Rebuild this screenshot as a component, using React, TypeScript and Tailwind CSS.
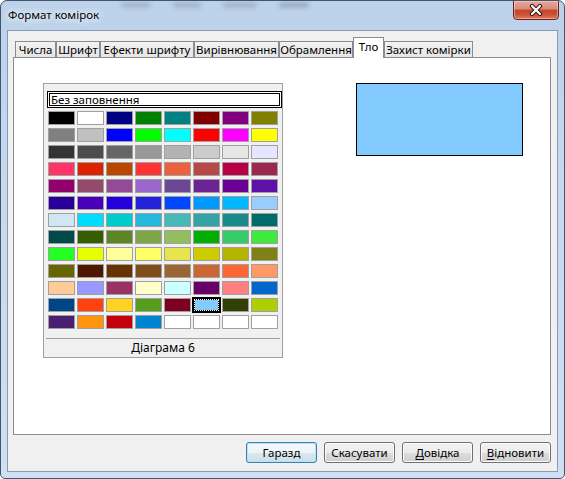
import React from "react";

const ROWS: string[][] = [
  ["#000000", "#ffffff", "#000080", "#008000", "#008080", "#800000", "#800080", "#808000"],
  ["#808080", "#c0c0c0", "#0000ff", "#00ff00", "#00ffff", "#ff0000", "#ff00ff", "#ffff00"],
  ["#333333", "#4c4c4c", "#666666", "#999999", "#b3b3b3", "#cccccc", "#e6e6e6", "#e6e6ff"],
  ["#ff3366", "#dc2300", "#b84700", "#ff3333", "#eb613d", "#b84747", "#b80047", "#99284c"],
  ["#94006b", "#944a6b", "#944a94", "#9966cc", "#6b4794", "#6b2394", "#6b0094", "#5e11a6"],
  ["#280099", "#4700b8", "#2300dc", "#2323dc", "#0047ff", "#0099ff", "#00b8ff", "#99ccff"],
  ["#cfe7f5", "#00dcff", "#00cccc", "#23b8dc", "#47b8b8", "#33a3a3", "#198a8a", "#006b6b"],
  ["#004a4a", "#355e00", "#5c8526", "#7da647", "#94bd5e", "#00ae00", "#33cc66", "#3deb3d"],
  ["#23ff23", "#e6ff00", "#ffff99", "#ffff66", "#e6e64c", "#cccc00", "#b3b300", "#808019"],
  ["#666600", "#4c1900", "#663300", "#804c19", "#996633", "#cc6633", "#ff6633", "#ff9966"],
  ["#ffcc99", "#9999ff", "#993366", "#ffffcc", "#ccffff", "#660066", "#ff8080", "#0066cc"],
  ["#004586", "#ff420e", "#ffd320", "#579d1c", "#7e0021", "#83caff", "#314004", "#aecf00"],
  ["#4b1f6f", "#ff950e", "#c5000b", "#0084d1", "#ffffff", "#ffffff", "#ffffff", "#ffffff"],
];

const TABS: { label: string; w: string; active?: boolean }[] = [
  { label: "Числа", w: "w-[41px]" },
  { label: "Шрифт", w: "w-[44px]" },
  { label: "Ефекти шрифту", w: "w-[94px]" },
  { label: "Вирівнювання", w: "w-[85px]" },
  { label: "Обрамлення", w: "w-[74px]" },
  { label: "Тло", w: "w-[31px]", active: true },
  { label: "Захист комірки", w: "w-[89px]" },
];

function Swatch({ color, selected }: { color: string; selected: boolean }) {
  if (selected) {
    return (
      <div className="-m-[1px] h-[16px] w-[29px] bg-black p-[2px]">
        <div className="h-full w-full border border-dotted border-white">
          <div className="h-full w-full" style={{ backgroundColor: color }} />
        </div>
      </div>
    );
  }
  return (
    <div
      className="h-[14px] w-[27px] border border-[#a0a0a0]"
      style={{ backgroundColor: color }}
    />
  );
}

function Button({ children, def }: { children: React.ReactNode; def?: boolean }) {
  return (
    <div
      className={
        "flex h-[21px] w-[71px] items-center justify-center whitespace-nowrap rounded-[3px] border text-[11.5px] text-black " +
        (def
          ? "border-[#3c7fb1] bg-[linear-gradient(to_bottom,#f4f9fc_0%,#edf3f7_50%,#dde8ef_50%,#cfdde7_100%)] shadow-[inset_0_0_0_1px_#b5e3f8]"
          : "border-[#707070] bg-[linear-gradient(to_bottom,#f2f2f2_0%,#ebebeb_50%,#dddddd_50%,#cfcfcf_100%)] shadow-[inset_0_0_0_1px_#fcfcfc]")
      }
    >
      {children}
    </div>
  );
}

export default function App() {
  return (
    <div className="h-[479px] w-[565px] overflow-hidden bg-white font-['Noto_Sans','Open_Sans',sans-serif]">
      <div className="flex h-[479px] w-[565px] flex-col overflow-hidden rounded-t-[7px] rounded-b-[5px] border border-[#44546a] bg-[linear-gradient(to_bottom,#bcd2ea_0%,#c6d9ef_40%,#cfe0f4_100%)]">
        {/* title bar */}
        <div className="relative flex h-[29px] shrink-0 items-start">
          <div className="pointer-events-none absolute left-[120px] top-[1px] flex gap-[22px] opacity-50 blur-[2px]">
            <div className="h-[6px] w-[30px] rounded bg-[#8d9bb0]" />
            <div className="h-[6px] w-[28px] rounded bg-[#8d9bb0]" />
            <div className="h-[6px] w-[34px] rounded bg-[#8d9bb0]" />
            <div className="h-[6px] w-[30px] rounded bg-[#7c8aa0]" />
          </div>
          <div className="relative ml-[7px] mt-[6px] whitespace-nowrap text-[11.5px] leading-[16px] text-black [text-shadow:0_0_6px_#ffffff,0_0_10px_#ffffff]">
            Формат комірок
          </div>
          <div className="flex-1" />
          <div className="relative mr-[5px] mt-[-1px] flex h-[20px] w-[46px] items-center justify-center rounded-b-[4px] border border-[#6b2419] bg-[linear-gradient(to_bottom,#e8a899_0%,#d98a78_45%,#c4452c_50%,#cc5237_75%,#e07a5c_100%)] shadow-[inset_0_0_0_1px_rgba(255,255,255,0.35)]">
            <svg width="14" height="12" viewBox="0 0 14 12">
              <path d="M3 2 L11 10 M11 2 L3 10" stroke="#3a1a14" strokeWidth="4.2" strokeLinecap="round" />
              <path d="M3 2 L11 10 M11 2 L3 10" stroke="#ffffff" strokeWidth="2.2" strokeLinecap="round" />
            </svg>
          </div>
        </div>

        {/* client area */}
        <div className="mx-[6px] flex h-[442px] shrink-0 flex-col border border-[#8a9bb1] bg-[#f0f0f0]">
          {/* tabs */}
          <div className="ml-[7px] flex h-[26px] items-end">
            {TABS.map((t) =>
              t.active ? (
                <div
                  key={t.label}
                  className={
                    t.w +
                    " relative z-10 -mb-px flex h-[21px] items-start justify-center whitespace-nowrap border border-b-0 border-[#898c95] bg-white pt-[1px] text-[11.5px] leading-[16px] text-black"
                  }
                >
                  {t.label}
                </div>
              ) : (
                <div
                  key={t.label}
                  className={
                    t.w +
                    " flex h-[16px] items-center justify-center whitespace-nowrap border border-b-0 border-[#898c95] bg-[linear-gradient(to_bottom,#f3f3f3,#e5e5e5)] text-[11.5px] leading-[15px] text-black"
                  }
                >
                  {t.label}
                </div>
              )
            )}
          </div>

          {/* panel */}
          <div className="ml-[5px] mr-[6px] flex h-[378px] border border-[#898c95] bg-white">
            <div className="ml-[29px] mt-[25px] flex h-[275px] w-[240px] flex-col border border-[#a0a0a0] bg-[#f0f0f0]">
              <div className="ml-[3px] mt-[7px] h-[17px] w-[235px] border border-black bg-white p-[1px]">
                <div className="flex h-full w-full items-center whitespace-nowrap border border-black bg-white pl-[1px] text-[11.5px] leading-[13px] text-black">
                  Без заповнення
                </div>
              </div>
              <div className="ml-[4px] mt-[3px] grid grid-cols-[repeat(8,27px)] grid-rows-[repeat(13,14px)] gap-x-[2px] gap-y-[3px]">
                {ROWS.map((row, r) =>
                  row.map((c, i) => (
                    <Swatch key={r + "-" + i} color={c} selected={r === 11 && i === 5} />
                  ))
                )}
              </div>
              <div className="ml-[2px] mt-[9px] h-px w-[234px] bg-[#a0a0a0]" />
              <div className="flex h-[18px] items-center justify-center text-[12px] text-black">
                Діаграма 6
              </div>
            </div>
            <div className="ml-[73px] mt-[25px] h-[73px] w-[167px] border border-black bg-[#83caff]" />
          </div>

          {/* buttons */}
          <div className="mr-[6px] mt-[7px] flex justify-end gap-[7px]">
            <Button def>Гаразд</Button>
            <Button>Скасувати</Button>
            <Button>
              <span>
                <span className="underline underline-offset-2">Д</span>овідка
              </span>
            </Button>
            <Button>
              <span>
                <span className="underline underline-offset-2">В</span>ідновити
              </span>
            </Button>
          </div>
        </div>
      </div>
    </div>
  );
}
